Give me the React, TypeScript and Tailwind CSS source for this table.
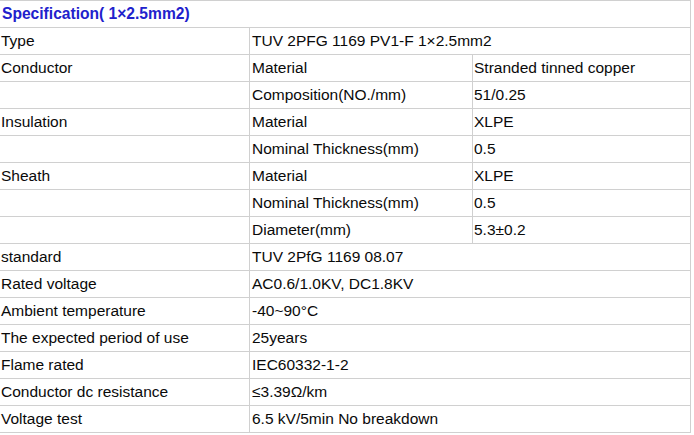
import React from "react";

type Row = { a: string; b: string; c?: string };

const rows: Row[] = [
  { a: "Type", b: "TUV 2PFG 1169 PV1-F 1×2.5mm2" },
  { a: "Conductor", b: "Material", c: "Stranded tinned copper" },
  { a: "", b: "Composition(NO./mm)", c: "51/0.25" },
  { a: "Insulation", b: "Material", c: "XLPE" },
  { a: "", b: "Nominal Thickness(mm)", c: "0.5" },
  { a: "Sheath", b: "Material", c: "XLPE" },
  { a: "", b: "Nominal Thickness(mm)", c: "0.5" },
  { a: "", b: "Diameter(mm)", c: "5.3±0.2" },
  { a: "standard", b: "TUV 2PfG 1169 08.07" },
  { a: "Rated voltage", b: "AC0.6/1.0KV, DC1.8KV" },
  { a: "Ambient temperature", b: "-40~90°C" },
  { a: "The expected period of use", b: "25years" },
  { a: "Flame rated", b: "IEC60332-1-2" },
  { a: "Conductor dc resistance", b: "≤3.39Ω/km" },
  { a: "Voltage test", b: "6.5 kV/5min No breakdown" },
];

const cell =
  "h-[27px] flex items-center border-r border-b border-[#d0d0d0] whitespace-nowrap overflow-hidden";

export default function App() {
  return (
    <div className="bg-white w-[694px] h-[435px] font-['Liberation_Sans',Arial,sans-serif] text-[15.5px] text-[#0a0a0a]">
      <div className="grid grid-cols-[250px_223px_218px] w-[691px] border-t border-[#d0d0d0]">
        <div
          className={`${cell} col-span-3 pl-[2px] text-[15.6px] font-bold text-[#2121cc]`}
        >
          Specification( 1×2.5mm2)
        </div>
        {rows.map((r, i) => (
          <React.Fragment key={i}>
            <div className={`${cell} pl-[1px]`}>{r.a}</div>
            {r.c === undefined ? (
              <div className={`${cell} col-span-2 pl-[2px]`}>{r.b}</div>
            ) : (
              <>
                <div className={`${cell} pl-[2px]`}>{r.b}</div>
                <div className={`${cell} pl-[1px]`}>{r.c}</div>
              </>
            )}
          </React.Fragment>
        ))}
      </div>
    </div>
  );
}
